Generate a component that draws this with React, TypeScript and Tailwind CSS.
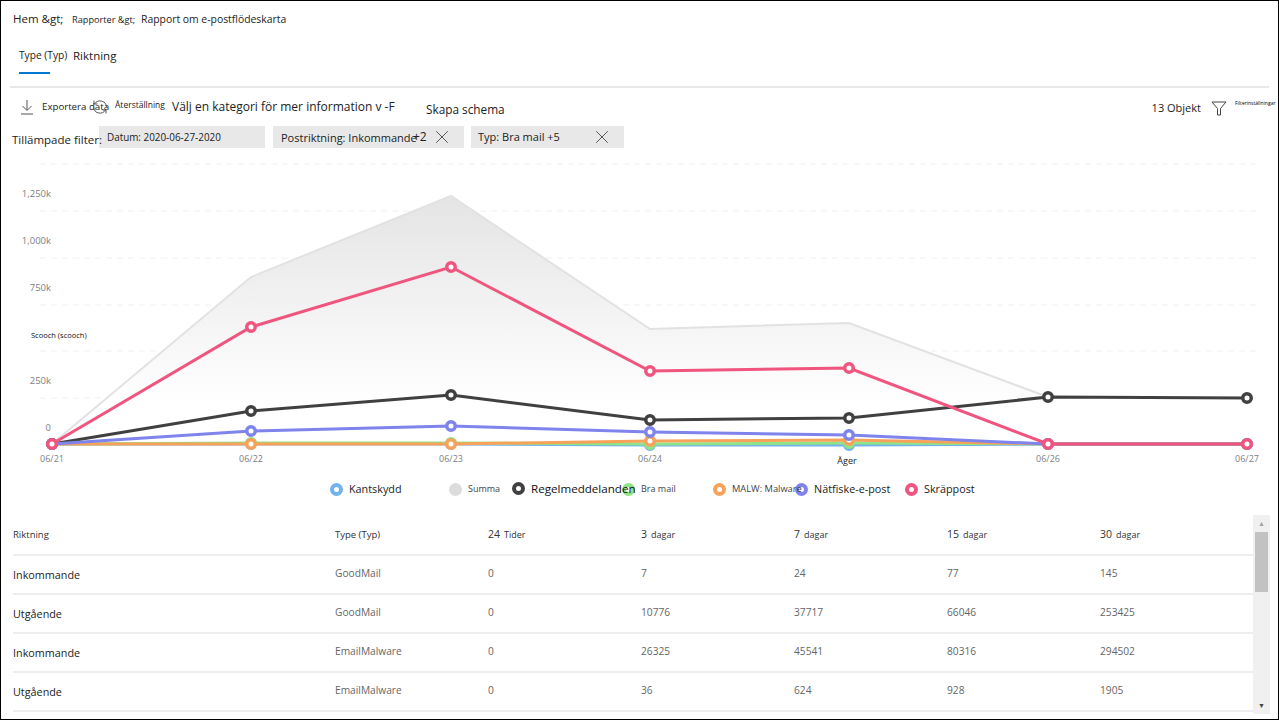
import { X } from 'lucide-react';

const xs = [52, 251, 451, 650, 849, 1048, 1247];

const series = [
    { name: 'blue', color: '#73b2ee', ys: [444, 444, 444, 445, 445, 444, 444] },
    { name: 'green', color: '#8fe388', ys: [444, 443, 443, 444, 443, 444, 444] },
    { name: 'orange', color: '#f7a25a', ys: [444, 444, 444, 441, 440, 444, 444] },
    { name: 'black', color: '#404040', ys: [444, 411, 395, 420, 418, 397, 398] },
    { name: 'purple', color: '#7f83ec', ys: [444, 431, 426, 432, 435, 444, 444] },
    { name: 'pink', color: '#f0557f', ys: [444, 327, 267, 371, 368, 444, 444] },
];

const gridLines = [164, 211, 258, 305, 351, 398, 444];
const yLabels = [
    { y: 197, text: '1,250k' },
    { y: 244, text: '1,000k' },
    { y: 291, text: '750k' },
    { y: 384, text: '250k' },
    { y: 431, text: '0' },
];
const xLabels = ['06/21', '06/22', '06/23', '06/24', '', '06/26', '06/27'];

const legend = [
    { label: 'Kantskydd', color: '#73b2ee', width: 'w-[119px]', text: 'text-[10.8px] text-[#222]' },
    { label: 'Summa', color: '#dcdcdc', solid: true, width: 'w-[63px]', text: 'text-[9px] text-[#444]' },
    { label: 'Regelmeddelanden', color: '#404040', width: 'w-[110px]', text: 'text-[11.6px] text-[#111]' },
    { label: 'Bra mail', color: '#8fe388', width: 'w-[91px]', text: 'text-[9px] text-[#444]' },
    { label: 'MALW: Malware', color: '#f7a25a', width: 'w-[82px]', text: 'text-[9.3px] text-[#444]' },
    { label: 'Nätfiske-e-post', color: '#7f83ec', width: 'w-[110px]', text: 'text-[10.8px] text-[#222]' },
    { label: 'Skräppost', color: '#f0557f', width: 'w-[90px]', text: 'text-[10.8px] text-[#222]' },
];

const rows = [
    ['Inkommande', 'GoodMail', '0', '7', '24', '77', '145'],
    ['Utgående', 'GoodMail', '0', '10776', '37717', '66046', '253425'],
    ['Inkommande', 'EmailMalware', '0', '26325', '45541', '80316', '294502'],
    ['Utgående', 'EmailMalware', '0', '36', '624', '928', '1905'],
];

const headDays = [
    ['24', 'Tider'],
    ['3', 'dagar'],
    ['7', 'dagar'],
    ['15', 'dagar'],
    ['30', 'dagar'],
];

function Chart() {
    const gray = [[52, 444], [251, 277], [451, 196], [650, 329], [849, 323], [1048, 397]];
    const line = gray.map((p) => p.join(',')).join(' ');

    return (
        <svg width="1277" height="320" viewBox="1 155 1277 320" className="block mt-[7px]">
            <defs>
                <linearGradient id="area" x1="0" y1="196" x2="0" y2="405" gradientUnits="userSpaceOnUse">
                    <stop offset="0" stopColor="#e4e4e4" />
                    <stop offset="1" stopColor="#ffffff" />
                </linearGradient>
            </defs>

            {gridLines.map((y) => (
                <line key={y} x1="40" x2="1262" y1={y} y2={y} stroke="#f0f0f0" strokeDasharray="6 5" />
            ))}

            <polygon points={`${line} 1048,444`} fill="url(#area)" />
            <polyline points={line} fill="none" stroke="#e2e2e2" strokeWidth="2" />

            {yLabels.map((l) => (
                <text key={l.text} x="51" y={l.y} textAnchor="end" fontSize="9.5" fill="#808080">
                    {l.text}
                </text>
            ))}
            <text x="31" y="338" fontSize="7.5" fill="#111">Scooch (scooch)</text>

            {xLabels.map((label, i) => (
                <text key={i} x={xs[i]} y="462" textAnchor="middle" fontSize="9" fill="#808080">
                    {label}
                </text>
            ))}
            <text x="847" y="464" textAnchor="middle" fontSize="9" fill="#222">Äger</text>

            {series.map((s) => (
                <g key={s.name}>
                    <polyline
                        points={s.ys.map((y, i) => `${xs[i]},${y}`).join(' ')}
                        fill="none"
                        stroke={s.color}
                        strokeWidth="3"
                    />
                    {s.ys.map((y, i) => (
                        <circle key={i} cx={xs[i]} cy={y} r="4.25" fill="#fff" stroke={s.color} strokeWidth="3.5" />
                    ))}
                </g>
            ))}
        </svg>
    );
}

export default function App() {
    return (
        <div className="w-[1279px] h-[720px] overflow-hidden border border-black bg-white font-['Open_Sans',sans-serif] text-[#222]">
            {/* Breadcrumb */}
            <div className="flex items-baseline h-[35px] pl-3 pt-[9px] whitespace-nowrap">
                <span className="text-[11.5px] w-[59px]">Hem &amp;gt;</span>
                <span className="text-[9.2px] w-[69px]">Rapporter &amp;gt;</span>
                <span className="text-[10.4px]">Rapport om e-postflödeskarta</span>
            </div>

            {/* Tabs */}
            <div className="flex h-[38px] ml-[18px] items-start">
                <div className="h-[38px] w-[31px] border-b-2 border-[#0078d4] pt-[12px] text-[10.2px] leading-[14px] whitespace-nowrap">
                    Type (Typ)
                </div>
                <div className="ml-[23px] pt-[12px] text-[11.5px] leading-[16px]">Riktning</div>
            </div>

            <div className="mx-[9px] mt-[12px] h-[2px] bg-[#e8e8e8]" />

            {/* Toolbar */}
            <div className="flex items-center h-[38px] pl-[19px] pr-[4px] whitespace-nowrap">
                <svg width="14" height="16" viewBox="0 0 14 16" fill="none" stroke="#555" className="shrink-0">
                    <path d="M7 1v10M2.5 7 7 11.5 11.5 7M1 15h12" />
                </svg>
                <span className="ml-[8px] w-[51px] text-[9.7px]">Exportera data</span>
                <svg width="16" height="16" viewBox="0 0 16 16" fill="none" stroke="#555" className="-ml-[1px] shrink-0">
                    <path d="M2.5 5A6.5 6.5 0 0 1 14.5 8M13.5 11A6.5 6.5 0 0 1 1.5 8M2 1.5V5h3.5M14 14.5V11h-3.5" />
                </svg>
                <span className="ml-[7px] w-[57px] text-[8.5px] -mt-[4px]">Återställning</span>
                <span className="w-[254px] text-[12px]">Välj en kategori för mer information v -F</span>
                <span className="text-[11.8px] mt-[6px]">Skapa schema</span>
                <span className="ml-auto text-[11px] mt-[2px]">13 Objekt</span>
                <svg width="16" height="15" viewBox="0 0 16 15" fill="none" stroke="#444" className="ml-[10px] mt-[2px] shrink-0">
                    <path d="M1 1h14L9.5 7.5V14h-3V7.5z" />
                </svg>
                <span className="ml-[8px] text-[5px] -mt-[7px] w-[39px] text-black">Filterinställningar</span>
            </div>

            {/* Applied filters */}
            <div className="flex items-center h-[22px] pl-[11px] whitespace-nowrap">
                <span className="relative z-10 w-[87px] text-[11.5px] mt-[6px]">Tillämpade filter:</span>
                <div className="flex items-center w-[166px] h-[22px] bg-[#e8e8e8] pl-[8px] text-[9.9px]">
                    Datum: 2020-06-27-2020
                </div>
                <div className="flex items-center w-[191px] h-[22px] ml-[8px] bg-[#e8e8e8] pl-[8px] text-[11px]">
                    <span className="w-[132px] mt-[3px]">Postriktning: Inkommande</span>
                    <span className="text-[12px]">+2</span>
                    <X size={22} strokeWidth={0.8} className="ml-[4px]" />
                </div>
                <div className="flex items-center w-[153px] h-[22px] ml-[7px] bg-[#e8e8e8] pl-[7px] text-[11px]">
                    <span className="w-[113px]">Typ: Bra mail +5</span>
                    <X size={22} strokeWidth={0.8} />
                </div>
            </div>

            <Chart />

            {/* Legend */}
            <div className="flex items-center h-[28px] pl-[329px] whitespace-nowrap">
                {legend.map((item) => (
                    <div key={item.label} className={`flex items-center gap-[6px] ${item.width}`}>
                        <span
                            className="w-[13px] h-[13px] rounded-full shrink-0 border-[4px]"
                            style={{ borderColor: item.color, background: item.solid ? item.color : '#fff' }}
                        />
                        <span className={`relative z-10 ${item.text}`}>{item.label}</span>
                    </div>
                ))}
            </div>

            {/* Table */}
            <div className="flex mt-[13px] pl-[12px] pr-[8px]">
                <div className="w-[1240px]">
                    <div className="grid grid-cols-[322px_153px_153px_153px_153px_153px_153px] items-center h-[40px] border-b-2 border-[#eeeeee] pt-[1px] text-[9.5px] text-[#333]">
                        <span>Riktning</span>
                        <span>Type (Typ)</span>
                        {headDays.map(([n, unit]) => (
                            <span key={n} className="flex items-baseline gap-[4px] -mt-[2px]">
                                <span className="text-[10.5px]">{n}</span>
                                <span className="text-[9px]">{unit}</span>
                            </span>
                        ))}
                    </div>
                    {rows.map((row, i) => (
                        <div
                            key={i}
                            className="grid grid-cols-[322px_153px_153px_153px_153px_153px_153px] items-center h-[39px] border-b-2 border-[#eeeeee] text-[10.2px] text-[#666]"
                        >
                            <span className="text-[10.8px] text-[#222] mt-[2px]">{row[0]}</span>
                            {row.slice(1).map((cell, j) => (
                                <span key={j} className="-mt-[1px]">{cell}</span>
                            ))}
                        </div>
                    ))}
                </div>
                <div className="flex flex-col items-center w-[17px] h-[199px] -mt-[1px] bg-[#f0f0f0]">
                    <div className="h-[17px] text-[#a3a3a3] text-[7px] leading-[17px]">▲</div>
                    <div className="w-[13px] h-[60px] bg-[#c2c2c2]" />
                    <div className="mt-auto h-[17px] text-[#444] text-[7px] leading-[17px]">▼</div>
                </div>
            </div>
        </div>
    );
}
